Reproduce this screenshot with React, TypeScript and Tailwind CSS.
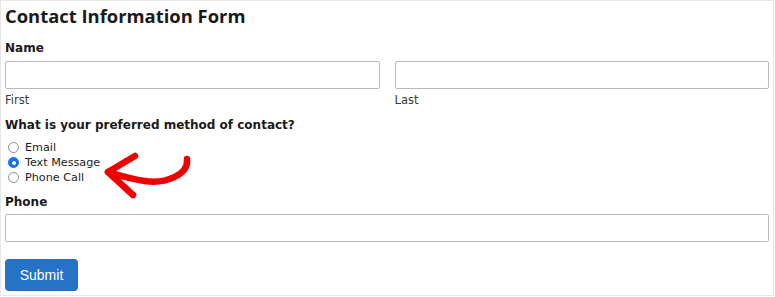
const font = "font-['DejaVu_Sans','Verdana',sans-serif]";

function TextField({ className = '' }: { className?: string }) {
  return (
    <input
      type="text"
      className={`block h-[28px] w-full rounded-[2px] border border-[#b9b9b9] bg-white px-2 text-[13px] outline-none ${className}`}
    />
  );
}

function Radio({ label, checked = false }: { label: string; checked?: boolean }) {
  return (
    <label className="flex h-[15px] items-center">
      <span
        className={`ml-[3px] mr-[6px] flex h-[11px] w-[11px] items-center justify-center rounded-full border ${
          checked ? 'border-[#1c6ef2] bg-[#1c6ef2]' : 'border-[#8e8e8e] bg-white'
        }`}
      >
        {checked && <span className="h-[4px] w-[4px] rounded-full bg-white" />}
      </span>
      <span className="text-[11.2px] leading-[15px] text-[#222]">{label}</span>
    </label>
  );
}

export default function App() {
  return (
    <div
      className={`relative h-[296px] w-[774px] border border-[#e6e6e6] bg-white pl-[4px] pr-[4px] text-[#1a1a1a] ${font}`}
    >
      <h1 className="mt-[1px] font-['Open_Sans','DejaVu_Sans',sans-serif] text-[18.4px] font-bold leading-[28px]">
        Contact Information Form
      </h1>

      {/* Name */}
      <div className="mt-[9px] text-[12px] font-bold leading-[18px]">Name</div>
      <div className="mt-[4px] grid grid-cols-2 gap-[15px]">
        <div>
          <TextField />
          <div className="mt-[3px] text-[11.5px] leading-[16px] text-[#3a3a3a]">First</div>
        </div>
        <div>
          <TextField />
          <div className="mt-[3px] text-[11.5px] leading-[16px] text-[#3a3a3a]">Last</div>
        </div>
      </div>

      {/* Preferred contact */}
      <div className="mt-[8px] text-[12px] font-bold leading-[18px]">
        What is your preferred method of contact?
      </div>
      <div className="mt-[6px] flex flex-col">
        <Radio label="Email" />
        <Radio label="Text Message" checked />
        <Radio label="Phone Call" />
      </div>

      {/* Phone */}
      <div className="mt-[8px] text-[12px] font-bold leading-[18px]">Phone</div>
      <TextField className="mt-[3px]" />

      <button className="mt-[17px] h-[32px] w-[73px] rounded-[4px] bg-[#2473c6] font-['Liberation_Sans',Arial,sans-serif] text-[14px] text-white">
        Submit
      </button>

      {/* Annotation arrow */}
      <svg
        className="absolute left-[99px] top-[149px]"
        width="95"
        height="50"
        viewBox="0 0 95 50"
        fill="none"
        aria-hidden="true"
      >
        <path
          d="M87 9C89 25 65 34 45 31C30 29 18 25 8 22"
          stroke="#f00000"
          strokeWidth="6.5"
          strokeLinecap="round"
        />
        <path
          d="M35 6L8 22L33 45"
          stroke="#f00000"
          strokeWidth="6.5"
          strokeLinecap="round"
          strokeLinejoin="round"
        />
      </svg>
    </div>
  );
}
